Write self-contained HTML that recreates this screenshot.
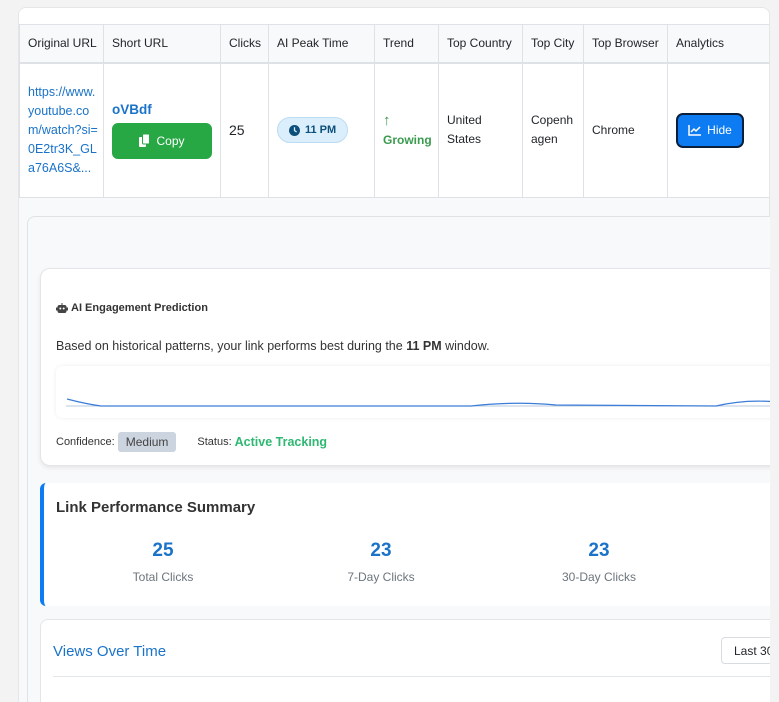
<!DOCTYPE html>
<html style="overflow:hidden;height:702px"><head><meta charset="utf-8"><style>
*{box-sizing:border-box;margin:0;padding:0}
body{width:779px;height:702px;overflow:hidden;background:#f3f3f4;font-family:"Liberation Sans",sans-serif;position:relative;color:#212529}
.abs{position:absolute}
.card{left:18px;top:7px;width:752px;height:695px;background:#f8f9fa;border:1px solid #e6e6e6;border-bottom:none;border-radius:8px 8px 0 0;overflow:hidden}
.top{left:0;top:0;width:752px;height:16px;background:#fff}
table{position:absolute;left:0;top:16px;border-collapse:collapse;background:#fff;font-size:12px;table-layout:fixed;width:751px}
th{background:#f8f9fa;font-weight:normal;text-align:left;padding:0 8px;height:38px;border:1px solid #dee2e6;border-bottom:2px solid #dee2e6;color:#212529;white-space:nowrap;overflow:hidden}
td{border:1px solid #dee2e6;padding:0 8px;height:135px;vertical-align:middle;overflow:hidden}
.url{color:#1a73c9;font-size:12.5px;line-height:19px;word-break:break-all;padding-right:4px}
.sh{color:#1a73c9;font-weight:bold;font-size:13.5px}
.copy{margin-top:6px;width:100px;height:36px;background:#28a745;border-radius:6px;color:#fff;display:flex;align-items:center;justify-content:center;font-size:12px;gap:6px}
.pill{display:inline-flex;align-items:center;gap:5px;background:#dbeefc;border:1px solid #bcdcf3;color:#0b4f7a;font-weight:bold;font-size:11px;border-radius:14px;height:26px;padding:0 11px}
.green{color:#3a9b4f;font-weight:bold}
.hide{width:68px;height:35px;background:#0d7bf2;border:2px solid #0b1f3a;border-radius:7px;color:#fff;display:flex;align-items:center;justify-content:center;gap:6px;font-size:12px}
.panel{left:27px;top:216px;width:760px;height:486px;border:1px solid #e0e3e6;border-bottom:none;border-radius:8px 8px 0 0;background:#f8f9fa}
.ai{left:40px;top:268px;width:740px;height:198px;background:#fff;border:1px solid #e3e6e9;border-radius:10px;box-shadow:0 2px 4px rgba(0,0,0,.08)}
.sum{left:40px;top:483px;width:740px;height:123px;background:#fff;border-left:4px solid #0d7bf2;border-radius:6px}
.views{left:40px;top:619px;width:740px;height:83px;background:#fff;border:1px solid #e3e6e9;border-bottom:none;border-radius:8px 8px 0 0;overflow:hidden}
.num{color:#1a73c9;font-weight:bold;font-size:19px;text-align:center}
.lab{color:#6c757d;font-size:12px;text-align:center}
</style></head><body>
<div class="abs card">
<div class="abs top"></div>
<table>
<colgroup><col style="width:84px"><col style="width:117px"><col style="width:48px"><col style="width:106px"><col style="width:64px"><col style="width:84px"><col style="width:61px"><col style="width:84px"><col style="width:103px"></colgroup>
<tr><th>Original URL</th><th>Short URL</th><th>Clicks</th><th>AI Peak Time</th><th>Trend</th><th>Top Country</th><th>Top City</th><th>Top Browser</th><th>Analytics</th></tr>
<tr><td class="url">https://www.youtube.com/watch?si=0E2tr3K_GLa76A6S&amp;...</td>
<td><div class="sh">oVBdf</div><div class="copy"><svg width="11" height="13" viewBox="0 0 11 13"><rect x="0" y="3" width="7" height="10" rx="1" fill="#fff"/><rect x="3.5" y="0" width="7" height="10" rx="1" fill="#fff" stroke="#28a745" stroke-width="1"/></svg>Copy</div></td>
<td style="font-size:14px">25</td>
<td><span class="pill"><svg width="11" height="11" viewBox="0 0 12 12"><circle cx="6" cy="6" r="6" fill="#0b4f7a"/><path d="M6 2.5V6l2.3 1.6" stroke="#dbeefc" stroke-width="1.4" fill="none"/></svg>11 PM</span></td>
<td class="green" style="font-size:12px;line-height:19px"><span style="font-size:15px">↑</span><br>Growing</td>
<td style="line-height:19px">United<br>States</td>
<td style="line-height:19px">Copenh<br>agen</td>
<td>Chrome</td>
<td><div class="hide"><svg width="13" height="11" viewBox="0 0 13 11"><path d="M1 0V10H13" stroke="#fff" stroke-width="1.5" fill="none"/><path d="M3 7L6 4L8 6L12 2" stroke="#fff" stroke-width="1.5" fill="none"/></svg>Hide</div></td></tr>
</table>
</div>
<div class="abs panel"></div>
<div class="abs ai">
<div class="abs" style="left:15px;top:33px;font-size:11px;font-weight:bold;color:#333;display:flex;align-items:center;gap:3px"><svg width="12" height="11" viewBox="0 0 12 11"><rect x="1.5" y="2" width="9" height="8" rx="2" fill="#444"/><rect x="0" y="4.5" width="1.5" height="3" fill="#444"/><rect x="10.5" y="4.5" width="1.5" height="3" fill="#444"/><rect x="5.5" y="0" width="1" height="2" fill="#444"/><circle cx="4.3" cy="5.5" r="1" fill="#fff"/><circle cx="7.7" cy="5.5" r="1" fill="#fff"/></svg>AI Engagement Prediction</div>
<div class="abs" style="left:15px;top:70px;font-size:12.5px;color:#333">Based on historical patterns, your link performs best during the <b>11 PM</b> window.</div>
<div class="abs" style="left:15px;top:97px;width:730px;height:52px;background:#fff;border-radius:6px;box-shadow:0 0 4px rgba(0,0,0,.08)">
<svg width="730" height="52" style="position:absolute;left:0;top:0"><line x1="10" y1="40" x2="730" y2="40" stroke="#b8c8e0" stroke-width="1"/><path d="M11 33 Q30 38 45 40 L415 40 Q460 35 500 39 L660 40 Q690 33 720 36" stroke="#3b7dd8" stroke-width="1.2" fill="none"/></svg></div>
<div class="abs" style="left:15px;top:163px;font-size:11px;color:#333;display:flex;align-items:center">Confidence:<span style="background:#ccd4df;color:#444;border-radius:3px;padding:3px 8px;margin-left:3px;font-size:12px">Medium</span><span style="margin-left:21px">Status: </span><span style="color:#2eb872;font-weight:bold;font-size:12.5px;margin-left:3px">Active Tracking</span></div>
</div>
<div class="abs sum">
<div class="abs" style="left:12px;top:16px;font-size:15px;font-weight:bold;color:#333">Link Performance Summary</div>
<div class="abs" style="left:49px;top:57px;width:140px"><div class="num">25</div><div class="lab" style="margin-top:8px">Total Clicks</div></div>
<div class="abs" style="left:267px;top:57px;width:140px"><div class="num">23</div><div class="lab" style="margin-top:8px">7-Day Clicks</div></div>
<div class="abs" style="left:485px;top:57px;width:140px"><div class="num">23</div><div class="lab" style="margin-top:8px">30-Day Clicks</div></div>
</div>
<div class="abs views">
<div class="abs" style="left:12px;top:23px;font-size:15px;color:#1a73c9">Views Over Time</div>
<div class="abs" style="left:680px;top:17px;width:80px;height:27px;border:1px solid #d8dbe0;border-radius:4px;font-size:12px;padding:6px 12px;background:#fff">Last 30</div>
<div class="abs" style="left:12px;top:56px;width:720px;height:1px;background:#e3e6e9"></div>
</div>
<div class="abs" style="left:770px;top:0;width:9px;height:702px;background:#f3f3f4"></div>
</body></html>
